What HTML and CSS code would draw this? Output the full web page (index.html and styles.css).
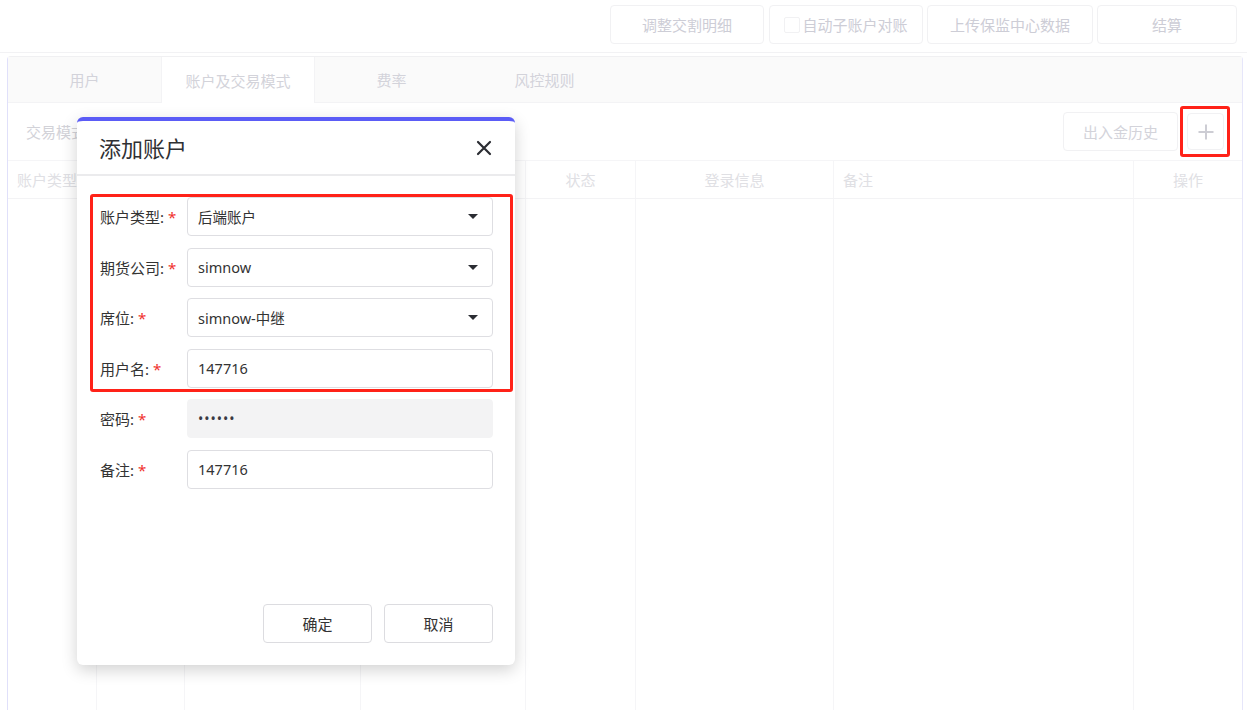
FILE: index.html
```html
<!DOCTYPE html>
<html lang="zh-CN">
<head>
<meta charset="UTF-8">
<meta name="viewport" content="width=device-width, initial-scale=1.0">
<title>账户及交易模式</title>
<link rel="stylesheet" href="styles.css">
</head>
<body>
<div class="topbar">
  <div class="actions">
    <button class="top-btn w154">调整交割明细</button>
    <button class="top-btn w154"><span class="check"></span>自动子账户对账</button>
    <button class="top-btn w166">上传保监中心数据</button>
    <button class="top-btn w140">结算</button>
  </div>
</div>

<div class="panel">
  <div class="tabs">
    <div class="tab">用户</div>
    <div class="tab active">账户及交易模式</div>
    <div class="tab">费率</div>
    <div class="tab">风控规则</div>
  </div>
  <div class="pane">
    <div class="toolbar">
      <span class="toolbar-title">交易模式</span>
      <div class="toolbar-right">
        <button class="ghost-btn history">出入金历史</button>
        <button class="ghost-btn plus">
          <svg width="16" height="16" viewBox="0 0 16 16">
            <path d="M8 0.5 V15.5 M0.5 8 H15.5" stroke="#cdcdd4" stroke-width="2"/>
          </svg>
        </button>
      </div>
    </div>
    <div class="grid head">
      <div class="cell left">账户类型</div>
      <div class="cell"></div>
      <div class="cell"></div>
      <div class="cell"></div>
      <div class="cell center">状态</div>
      <div class="cell center">登录信息</div>
      <div class="cell left">备注</div>
      <div class="cell center">操作</div>
    </div>
    <div class="grid body">
      <div class="cell"></div>
      <div class="cell"></div>
      <div class="cell"></div>
      <div class="cell"></div>
      <div class="cell"></div>
      <div class="cell"></div>
      <div class="cell"></div>
      <div class="cell"></div>
    </div>
  </div>
</div>

<div class="modal">
  <div class="modal-header">
    <span class="modal-title">添加账户</span>
    <svg class="close" width="16" height="16" viewBox="0 0 16 16">
      <path d="M2 2 L14 14 M14 2 L2 14" stroke="#2b2d33" stroke-width="2.2" stroke-linecap="round"/>
    </svg>
  </div>
  <div class="modal-body">
    <div class="row">
      <label>账户类型:<i>*</i></label>
      <div class="field select">后端账户<span class="arrow"></span></div>
    </div>
    <div class="row">
      <label>期货公司:<i>*</i></label>
      <div class="field select">simnow<span class="arrow"></span></div>
    </div>
    <div class="row">
      <label>席位:<i>*</i></label>
      <div class="field select">simnow-中继<span class="arrow"></span></div>
    </div>
    <div class="row">
      <label>用户名:<i>*</i></label>
      <div class="field">147716</div>
    </div>
    <div class="row">
      <label>密码:<i>*</i></label>
      <div class="field disabled"><span class="dots">••••••</span></div>
    </div>
    <div class="row">
      <label>备注:<i>*</i></label>
      <div class="field">147716</div>
    </div>
  </div>
  <div class="modal-footer">
    <button class="modal-btn">确定</button>
    <button class="modal-btn">取消</button>
  </div>
</div>

<div class="mark mark-form"></div>
<div class="mark mark-plus"></div>
</body>
</html>
```

FILE: styles.css
```css
body {
  margin: 0;
  font-family: "Noto Sans", "Noto Sans CJK SC", sans-serif;
  font-size: 15px;
  background-color: #fff;
  overflow: hidden;
  height: 710px;
}

button {
  font-family: inherit;
  font-size: 15px;
  cursor: pointer;
}

.topbar {
  height: 52px;
  border-bottom: 1px solid #f2f2f4;
}

.actions {
  display: flex;
  justify-content: flex-end;
  gap: 4px;
  padding: 5px 10px 0 0;
}

.top-btn {
  height: 39px;
  background-color: #fff;
  border: 1px solid #f1f1f3;
  border-radius: 4px;
  color: #cdcdd6;
  display: flex;
  align-items: center;
  justify-content: center;
}

.w154 { width: 154px; }
.w166 { width: 166px; }
.w140 { width: 140px; }

.top-btn:first-child {
  margin-right: 1px;
}

.check {
  width: 14px;
  height: 14px;
  border: 1px solid #f1f1f3;
  border-radius: 2px;
  margin-right: 2px;
}

.panel {
  margin: 3px 4px 0 7px;
  border: 1px solid #f0f0f2;
  border-bottom: none;
  border-left-color: #e0e0fa;
  border-right-color: #e6e6fa;
  border-radius: 4px 4px 0 0;
  height: 654px;
  display: flex;
  flex-direction: column;
}

.tabs {
  display: flex;
  height: 45px;
  flex-shrink: 0;
  background-color: #fafafa;
  border-bottom: 1px solid #f3f3f5;
}

.tab {
  width: 153px;
  display: flex;
  align-items: center;
  justify-content: center;
  color: #d3d3da;
}

.tab.active {
  background-color: #fff;
  border-left: 1px solid #f3f3f5;
  border-right: 1px solid #f3f3f5;
  margin-bottom: -1px;
  width: 152px;
}

.pane {
  flex: 1;
  display: flex;
  flex-direction: column;
}

.toolbar {
  height: 57px;
  flex-shrink: 0;
  display: flex;
  align-items: center;
  justify-content: space-between;
  padding: 0 18px 0 18px;
}

.toolbar-title {
  color: #d2d2d8;
}

.toolbar-right {
  display: flex;
  align-items: center;
  gap: 9px;
}

.ghost-btn {
  background-color: #fff;
  border: 1px solid #f1f1f3;
  border-radius: 4px;
  color: #d3d3da;
}

.history {
  width: 115px;
  height: 39px;
}

.plus {
  width: 37px;
  height: 37px;
  padding: 0;
  display: flex;
  align-items: center;
  justify-content: center;
}

.grid {
  display: grid;
  grid-template-columns: 88px 88px 176px 165px 110px 198px 300px 1fr;
}

.head {
  height: 37px;
  flex-shrink: 0;
  border-top: 1px solid #f5f5f7;
  border-bottom: 1px solid #f3f3f5;
}

.body {
  flex: 1;
}

.cell {
  border-left: 1px solid #f5f5f7;
  display: flex;
  align-items: center;
  color: #e0e0e4;
}

.cell:first-child {
  border-left: none;
}

.cell.left {
  padding-left: 9px;
}

.cell.center {
  justify-content: center;
}

/* dialog */
.modal {
  position: absolute;
  left: 77px;
  top: 117px;
  width: 438px;
  height: 544px;
  background-color: #fff;
  border-top: 4px solid #5b5cf6;
  border-radius: 6px;
  box-shadow: 0 5px 16px rgba(0, 0, 0, 0.18);
  display: flex;
  flex-direction: column;
}

.modal-header {
  height: 53px;
  border-bottom: 2px solid #ebebed;
  display: flex;
  align-items: center;
  justify-content: space-between;
  padding: 0 22px 0 22px;
}

.modal-title {
  font-size: 22px;
  color: #2f3033;
  margin-top: -1px;
}

.close {
  margin-right: 1px;
}

.modal-body {
  padding: 21px 22px 0 23px;
  display: flex;
  flex-direction: column;
  gap: 11.6px;
}

.row {
  display: flex;
  align-items: center;
}

.row label {
  width: 87px;
  color: #333;
}

.row label i {
  font-style: normal;
  color: #f0302c;
  margin-left: 4px;
}

.field {
  flex: 1;
  height: 37px;
  border: 1px solid #dedee2;
  border-radius: 4px;
  display: flex;
  align-items: center;
  padding: 0 10px;
  color: #333;
  font-size: 14.5px;
  position: relative;
}

.field.disabled {
  background-color: #f3f3f4;
  border-color: #f3f3f4;
}

.dots {
  font-size: 14px;
  letter-spacing: 1px;
  color: #3a3a44;
}

.arrow {
  position: absolute;
  right: 14px;
  top: 16px;
  width: 0;
  height: 0;
  border-left: 5px solid transparent;
  border-right: 5px solid transparent;
  border-top: 5px solid #2b2d33;
}

.modal-footer {
  margin-top: auto;
  display: flex;
  justify-content: flex-end;
  gap: 12px;
  padding: 0 22px 22px;
}

.modal-btn {
  width: 109px;
  height: 39px;
  background-color: #fff;
  border: 1px solid #dcdce0;
  border-radius: 4px;
  color: #333;
}

/* red annotation frames */
.mark {
  position: absolute;
  border: 3px solid #ff2218;
  border-radius: 3px;
}

.mark-form {
  left: 90px;
  top: 194px;
  width: 417px;
  height: 192px;
}

.mark-plus {
  left: 1180px;
  top: 106px;
  width: 44px;
  height: 45px;
}
```
